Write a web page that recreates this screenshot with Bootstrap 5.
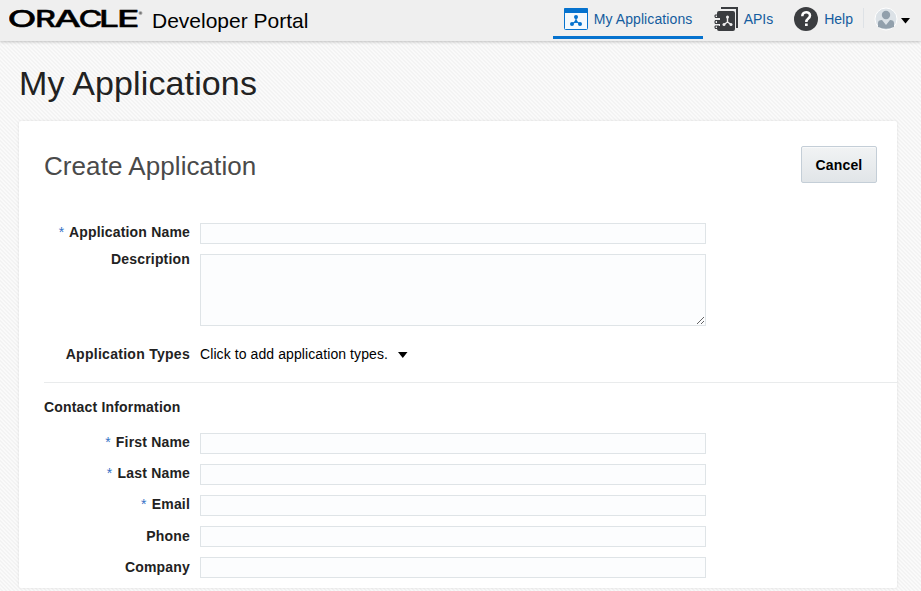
<!DOCTYPE html>
<html lang="en">
<head>
<meta charset="utf-8">
<meta name="viewport" content="width=device-width, initial-scale=1">
<title>Developer Portal</title>
<link href="https://cdn.jsdelivr.net/npm/bootstrap@5.3.0/dist/css/bootstrap.min.css" rel="stylesheet">
<style>
body{font-family:"Liberation Sans",Arial,sans-serif;font-size:14px;line-height:18px;color:#222;height:591px;overflow:hidden;
background:repeating-linear-gradient(45deg,#fafafa 0 1.414px,#f3f3f3 1.414px 2.828px)}
.topbar{height:41px;padding:0 11px 0 9px;background:#efefef;box-shadow:0 1px 3px rgba(0,0,0,.22)}
.brand-title{font-size:21px;line-height:24px;color:#000;margin:9px 0 0 9px}
.main-nav .nav-link{height:39px;padding:0 10px 0 11px;color:#145c9e;border-bottom:3px solid transparent;gap:6px;border-radius:0}
.main-nav .nav-link>svg,.main-nav .nav-link>span{margin-top:2px}
.main-nav .nav-link.active{border-color:#0572ce;width:150px}
.main-nav .nav-link.active span{letter-spacing:.1px}
.page-title{font-size:34px;line-height:40px;letter-spacing:.12px;margin:22px 0 0 19px;color:#222}
.panel{width:878px;height:467px;margin:18px 0 0 19px;background:#fff;border-radius:2px;box-shadow:0 0 3px rgba(0,0,0,.1);padding-left:25px}
.panel-head{height:102px;padding:25px 20px 0 0}
.panel-title{font-size:26px;line-height:30px;letter-spacing:.07px;color:#4a4a4a;margin:5px 0 0}
.btn-cancel{width:76px;height:37px;padding:1px 0 0;font-size:14px;font-weight:700;letter-spacing:.15px;color:#000;border:1px solid #c4ced7;border-radius:2px;background:linear-gradient(#f1f3f4,#e1e5e8);box-shadow:inset 0 1px #f8f9fa}
.field-row{display:grid;grid-template-columns:146px 506px;column-gap:10px;margin-bottom:10px}
.field-row label,.section-title{font-weight:700;font-size:14px;line-height:18px;letter-spacing:.18px;margin:0}
.field-row label{text-align:right}
.field-row .label-raised{margin-top:-4px}
.field-row .label-lowered{margin-top:1px}
.req{color:#3572c6;font-weight:400;margin-right:1px}
.field-row .form-control{height:21px;min-height:0;padding:0 4px;border:1px solid #dfe4e7;border-radius:0;background:#fcfdfe;font-size:14px}
.field-row textarea.form-control{height:72px;resize:vertical}
.types-row{margin:19px 0}
.types-row label{letter-spacing:.28px}
.types{letter-spacing:.09px;color:#000}
.types svg{margin-left:6px}
.rule{height:1px;background:#e9ebec}
.section-title{margin:15px 0 17px}
</style>
<script src="https://cdn.jsdelivr.net/npm/bootstrap@5.3.0/dist/js/bootstrap.bundle.min.js"></script>
</head>
<body>
<header class="topbar d-flex align-items-start justify-content-between">
  <div class="d-flex align-items-start">
    <svg width="134" height="40" role="img" aria-label="Oracle">
      <text y="27" font-family="Inter,sans-serif" font-weight="500" font-size="22.500" stroke="#000" stroke-width=".4"><tspan x="-1.500" textLength="29" lengthAdjust="spacingAndGlyphs">O</tspan><tspan x="26" textLength="21" lengthAdjust="spacingAndGlyphs">R</tspan><tspan x="45" textLength="27" lengthAdjust="spacingAndGlyphs">A</tspan><tspan x="69.500" textLength="24" lengthAdjust="spacingAndGlyphs">C</tspan><tspan x="90" textLength="20" lengthAdjust="spacingAndGlyphs">L</tspan><tspan x="108" textLength="22.500" lengthAdjust="spacingAndGlyphs">E</tspan></text>
      <circle cx="131.500" cy="13" r="1.600" fill="#777" stroke="#aaa" stroke-width=".7"/>
    </svg>
    <span class="brand-title">Developer Portal</span>
  </div>
  <nav class="main-nav nav flex-nowrap align-items-start">
    <a class="nav-link active d-flex align-items-center" href="#">
      <svg width="24" height="22" viewBox="0 0 24 22"><rect x=".5" y=".5" width="23" height="21" rx="1" fill="#f4f9fd" stroke="#0572ce"/><path d="M0 1Q0 0 1 0H23Q24 0 24 1V5H0Z" fill="#0572ce"/><path d="M12 9V13.5L7.5 16M12 13.5L16.500 16" fill="none" stroke="#0572ce" stroke-width="1.300"/><g fill="#0572ce"><circle cx="12" cy="9" r="2"/><circle cx="12" cy="13.500" r="1.500"/><circle cx="8" cy="16" r="2"/><circle cx="16" cy="16" r="2"/></g></svg>
      <span>My Applications</span>
    </a>
    <a class="nav-link d-flex align-items-center" href="#">
      <svg width="24" height="24" viewBox="0 0 24 24"><path d="M7 1H23V21" fill="none" stroke="#3b3d40" stroke-width="2"/><path d="M5 4H19Q21 4 21 6V22Q21 24 19 24H5Q3 24 3 22V19H6V17H3V13H6V11H3V6Q3 4 5 4Z" fill="#3b3d40"/><path d="M5 8H1.500Q.5 9 1.500 10.500H5M5 13.500H1.500Q.5 15 1.500 16.500H5M5 19H1.500Q.5 20 1.500 21.500H5" fill="none" stroke="#3b3d40" stroke-width="1.200"/><path d="M21.500 3V22" stroke="#efefef" stroke-width="1"/><path d="M13.500 10V15L10 17.500M13.500 15L17 17.500" fill="none" stroke="#efefef" stroke-width="1.400"/><g fill="#efefef"><circle cx="13.500" cy="10" r="1.500"/><circle cx="10" cy="17.500" r="1.500"/><circle cx="17" cy="17.500" r="1.500"/></g></svg>
      <span>APIs</span>
    </a>
    <a class="nav-link d-flex align-items-center" href="#">
      <svg width="24" height="24" viewBox="0 0 24 24"><circle cx="12" cy="12" r="12" fill="#3b3d40"/><path d="M8.300 9.300C8.300 3.800 16 4 16 8.600C16 11.800 12.300 11.300 12.300 15" fill="none" stroke="#fff" stroke-width="2.500"/><rect x="11" y="16.500" width="2.700" height="2.500" fill="#fff"/></svg>
      <span>Help</span>
    </a>
    <div class="d-flex align-items-center border-start ps-2 mt-2 pt-1">
      <svg class="overflow-visible" width="38" height="16"><circle cx="14" cy="7" r="11" fill="#dce2e7" stroke="#fff"/><circle cx="14" cy="3" r="4.200" fill="#92a0ac"/><path d="M6 15V11Q6 8 10 8L14 13L18 8Q22 8 22 11V15Q14 18.500 6 15Z" fill="#92a0ac"/><path d="M29 6H38L33.500 11.500Z" fill="#000"/></svg>
    </div>
  </nav>
</header>
<main>
  <h1 class="page-title fw-normal">My Applications</h1>
  <section class="panel">
    <div class="panel-head d-flex justify-content-between align-items-start">
      <h2 class="panel-title fw-normal">Create Application</h2>
      <button class="btn btn-cancel" type="button">Cancel</button>
    </div>
    <form>
      <div class="field-row"><label for="app"><span class="req">*</span> Application Name</label><input id="app" class="form-control"></div>
      <div class="field-row"><label for="desc" class="label-raised">Description</label><textarea id="desc" class="form-control"></textarea></div>
      <div class="field-row types-row"><label>Application Types</label><div class="types">Click to add application types. <svg width="10" height="6"><path d="M0 0H9.500L4.800 6Z"/></svg></div></div>
      <div class="rule"></div>
      <h3 class="section-title">Contact Information</h3>
      <div class="field-row"><label for="fn"><span class="req">*</span> First Name</label><input id="fn" class="form-control"></div>
      <div class="field-row"><label for="ln"><span class="req">*</span> Last Name</label><input id="ln" class="form-control"></div>
      <div class="field-row"><label for="em"><span class="req">*</span> Email</label><input id="em" class="form-control"></div>
      <div class="field-row"><label for="ph" class="label-lowered">Phone</label><input id="ph" class="form-control"></div>
      <div class="field-row"><label for="co" class="label-lowered">Company</label><input id="co" class="form-control"></div>
    </form>
  </section>
</main>
</body>
</html>
